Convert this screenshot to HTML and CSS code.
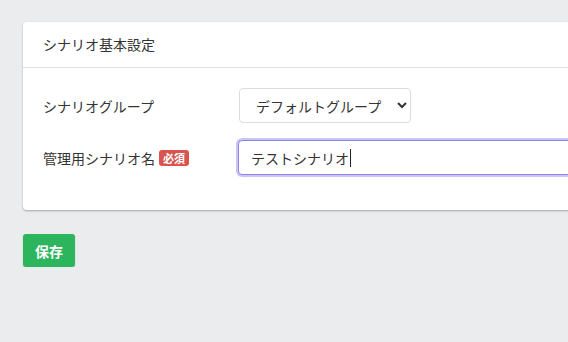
FILE: index.html
```html
<!DOCTYPE html>
<html lang="ja">
<head>
    <meta charset="UTF-8">
    <meta name="viewport" content="width=device-width, initial-scale=1.0">
    <title>シナリオ基本設定</title>
    <link rel="stylesheet" href="styles.css">
</head>
<body>
    <div class="page">
        <div class="card">
            <div class="card-header">シナリオ基本設定</div>
            <div class="card-body">
                <div class="form-row">
                    <label class="form-label" for="group">シナリオグループ</label>
                    <select id="group" class="form-select">
                        <option>デフォルトグループ</option>
                    </select>
                </div>
                <div class="form-row">
                    <label class="form-label" for="name">管理用シナリオ名 <span class="badge-required">必須</span></label>
                    <div class="form-input is-focused">
                        <span class="input-text">テストシナリオ</span><span class="caret"></span>
                    </div>
                </div>
            </div>
        </div>
        <button class="btn-save">保存</button>
    </div>
</body>
</html>
```

FILE: styles.css
```css
html, body { margin: 0; overflow: hidden; }
body {
    background-color: #ebecee;
    font-family: "Noto Sans CJK JP", "Noto Sans", sans-serif;
    color: #333;
    font-size: 14px;
}
.page { width: 640px; padding: 22px 0 0 23px; }
.card {
    background-color: #fff;
    border-radius: 4px;
    box-shadow: 0 1px 2px rgba(0, 0, 0, 0.3);
}
.card-header {
    height: 45px;
    line-height: 45px;
    padding: 0 20px;
    border-bottom: 1px solid #e1e1e3;
}
.card-body { padding: 20px 0 35px 20px; display: flex; flex-direction: column; gap: 17px; }
.form-row { display: flex; align-items: center; }
.form-label { width: 195px; display: flex; align-items: center; gap: 4px; }
.badge-required {
    background-color: #d9534f;
    color: #fff;
    font-size: 11px;
    font-weight: bold;
    line-height: 16px;
    padding: 0 4px;
    border-radius: 3px;
}
.form-select {
    width: 172px;
    height: 35px;
    margin-left: 1px;
    padding: 0 8px 0 12px;
    border: 1px solid #dcdcdc;
    border-radius: 4px;
    background-color: #fff;
    font-family: inherit;
    font-size: 14px;
    color: #333;
}
.form-input {
    width: 360px;
    height: 33px;
    display: flex;
    align-items: center;
    padding: 0 12px;
    border: 1px solid #8f84e6;
    border-radius: 4px;
    background-color: #fff;
}
.form-input.is-focused { box-shadow: 0 0 0 2px #cbc4f6; }
.caret { display: inline-block; width: 1px; height: 18px; background-color: #222; margin-left: 1px; }
.btn-save {
    margin-top: 24px;
    width: 52px;
    height: 33px;
    border: none;
    border-radius: 3px;
    background-color: #2db55d;
    color: #fff;
    font-family: inherit;
    font-size: 14px;
    font-weight: bold;
    box-shadow: 0 1px 2px rgba(0, 0, 0, 0.15);
}
```
